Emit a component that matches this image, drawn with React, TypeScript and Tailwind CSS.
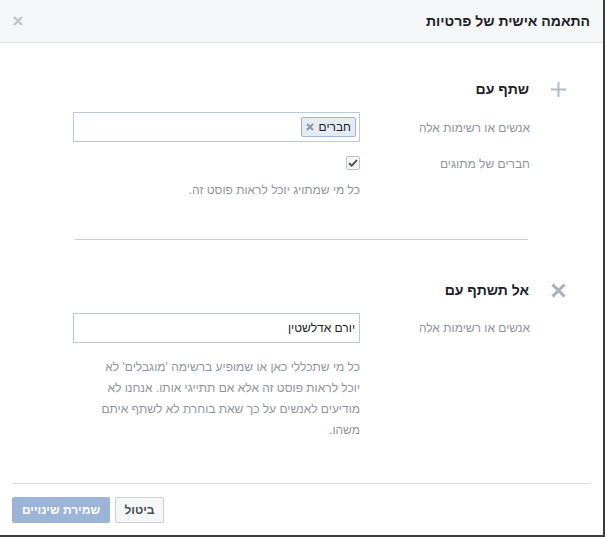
export default function App() {
  return (
    <div className="h-[537px] w-[605px] bg-[#3b3b3b]">
      <div
        dir="rtl"
        className="flex h-[535px] w-[603px] flex-col bg-white font-['Liberation_Sans',Arial,sans-serif] text-[12px] text-[#1d2129]"
      >
        {/* Header */}
        <header className="flex h-[43px] shrink-0 items-center justify-between border-b border-[#e5e5e5] bg-[#f5f6f7] pl-[13px] pr-[13px]">
          <h1 className="text-[14px] font-bold leading-[18px] text-[#1d2129]">התאמה אישית של פרטיות</h1>
          <button aria-label="סגור" className="flex h-[10px] w-[10px] items-center justify-center">
            <svg width="10" height="10" viewBox="0 0 10 10">
              <path d="M1 1L9 9M9 1L1 9" stroke="#bec2c9" strokeWidth="2.4" />
            </svg>
          </button>
        </header>

        {/* Body */}
        <div className="flex-1 pl-[73px] pr-[73px] pt-[36px]">
          {/* Share with */}
          <div className="-mr-[36px] flex h-[20px] items-center gap-[22px]">
            <svg width="15" height="15" viewBox="0 0 15 15" className="shrink-0">
              <path d="M7.5 0V15M0 7.5H15" stroke="#b4bac5" strokeWidth="2" />
            </svg>
            <h2 className="text-[14px] font-bold leading-[20px] text-[#1d2129]">שתף עם</h2>
          </div>

          <div className="mt-[13px] flex">
            <label className="w-[170px] shrink-0 pt-[9px] leading-[14px] text-[#90949c]">אנשים או רשימות אלה</label>
            <div className="flex h-[30px] flex-1 items-center border border-[#bdc7d8] pr-[3px]">
              <span className="flex h-[20px] items-center gap-[4px] rounded-[2px] border border-[#9cb4d8] bg-[#e6eaf2] pl-[4px] pr-[4px] leading-[14px]">
                חברים
                <svg width="8" height="8" viewBox="0 0 8 8">
                  <path d="M1 1L7 7M7 1L1 7" stroke="#8d97a8" strokeWidth="2" />
                </svg>
              </span>
            </div>
          </div>

          <div className="mt-[14px] flex">
            <label className="w-[170px] shrink-0 leading-[16px] text-[#90949c]">חברים של מתוגים</label>
            <div className="flex-1">
              <span className="flex h-[14px] w-[14px] items-center justify-center rounded-[2px] border border-[#bec3c9] bg-[#f5f6f7]">
                <svg width="10" height="8" viewBox="0 0 10 8">
                  <path d="M1 4.2L3.7 6.7L9 1.2" fill="none" stroke="#4b4f56" strokeWidth="1.9" />
                </svg>
              </span>
            </div>
          </div>

          <div className="mt-[10px] flex">
            <div className="w-[170px] shrink-0" />
            <p className="flex-1 leading-[16px] text-[#90949c]">כל מי שמתויג יוכל לראות פוסט זה.</p>
          </div>

          <div className="mx-[2px] mt-[41px] border-t border-[#cccccc]" />

          {/* Don't share with */}
          <div className="-mr-[36px] mt-[40px] flex h-[20px] items-center gap-[22px]">
            <svg width="15" height="15" viewBox="0 0 15 15" className="shrink-0">
              <path d="M1.5 1.5L13.5 13.5M13.5 1.5L1.5 13.5" stroke="#a9afbb" strokeWidth="3" />
            </svg>
            <h2 className="text-[14px] font-bold leading-[20px] text-[#1d2129]">אל תשתף עם</h2>
          </div>

          <div className="mt-[13px] flex">
            <label className="w-[170px] shrink-0 pt-[8px] leading-[14px] text-[#90949c]">אנשים או רשימות אלה</label>
            <div className="flex h-[30px] flex-1 items-center border border-[#bdc7d8] pr-[4px] leading-[14px] text-[#1d2129]">
              יורם אדלשטין
            </div>
          </div>

          <div className="mt-[14px] flex">
            <div className="w-[170px] shrink-0" />
            <p className="flex-1 leading-[21px] text-[#90949c]">
              כל מי שתכללי כאן או שמופיע ברשימה 'מוגבלים' לא
              <br />
              יוכל לראות פוסט זה אלא אם תתייגי אותו. אנחנו לא
              <br />
              מודיעים לאנשים על כך שאת בוחרת לא לשתף איתם
              <br />
              משהו.
            </p>
          </div>
        </div>

        {/* Footer */}
        <footer className="mx-[12px] flex shrink-0 justify-end gap-[5px] border-t border-[#dddfe2] pb-[12px] pt-[13px]">
          <button className="h-[26px] w-[49px] rounded-[2px] border border-[#ced0d4] bg-[#f5f6f7] text-[12px] font-bold text-[#4b4f56]">
            ביטול
          </button>
          <button className="h-[26px] w-[98px] rounded-[2px] border border-[#9cb4d8] bg-[#9cb4d8] text-[12px] font-bold text-white">
            שמירת שינויים
          </button>
        </footer>
      </div>
    </div>
  );
}
